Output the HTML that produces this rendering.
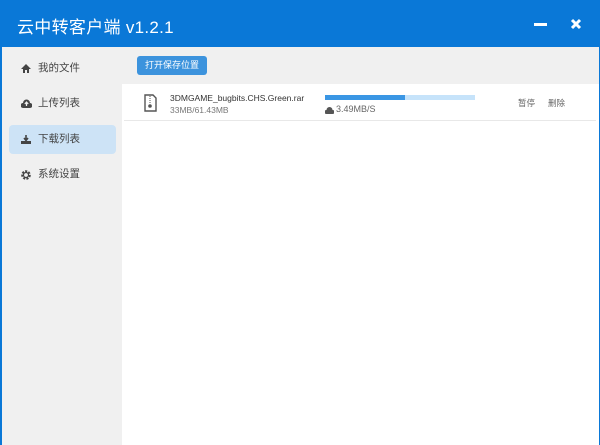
<html><head><style>
body{margin:0;width:600px;height:445px;overflow:hidden;font-family:"Liberation Sans","Noto Sans CJK SC",sans-serif;background:#0a78d7;position:relative}
.hd{position:absolute;left:0;top:0;width:600px;height:47px;background:#0a78d7;color:#fff;font-size:17px}
.side{position:absolute;left:2px;top:47px;width:120px;height:398px;background:#f0f0f0}
.main{position:absolute;left:122px;top:47px;width:477px;height:398px;background:#fff}
.tb{height:37px;background:#f0f0f0;position:relative}
.btn{position:absolute;left:15px;top:9px;width:70px;height:19px;background:#3c93dd;border-radius:3px;color:#fff;font-size:9px;text-align:center;line-height:19px}
.it{position:absolute;left:7px;width:107px;height:29px;font-size:10.5px;color:#444;line-height:29px;border-radius:4px}
.it svg{position:absolute;left:12px;top:10px}
.it b{font-weight:normal;position:absolute;left:29px}
.sm{font-size:9px;color:#333}
</style></head><body>
<div class="hd"><div style="position:absolute;left:17px;top:13px;letter-spacing:0.3px">云中转客户端 v1.2.1</div>
<div style="position:absolute;left:534px;top:23px;width:13px;height:3px;background:#fff"></div>
<svg style="position:absolute;left:570px;top:18px" width="12" height="12"><path d="M2 2L10 10M10 2L2 10" stroke="#fff" stroke-width="3"/></svg></div>
<div class="side">
<div class="it" style="top:7px"><svg width="10" height="9"><path d="M5 0L0 5H2V9H4V6H6V9H8V5H10Z" fill="#444"/></svg><b>我的文件</b></div>
<div class="it" style="top:42px"><svg width="11" height="9"><path d="M2 9A2 2 0 0 1 2 4A3.5 3.5 0 0 1 9 4A2.5 2.5 0 0 1 9 9Z" fill="#444"/><path d="M5.5 3V7M3.8 5L5.5 3L7.2 5" stroke="#f0f0f0" stroke-width="1.2" fill="none"/></svg><b>上传列表</b></div>
<div class="it" style="top:78px;background:#cde3f6"><svg width="10" height="9"><path d="M5 0V5M3 3L5 5.5L7 3" stroke="#444" stroke-width="1.6" fill="none"/><rect x="0" y="6" width="10" height="3" fill="#444"/></svg><b>下载列表</b></div>
<div class="it" style="top:113px"><svg width="10" height="10"><circle cx="5" cy="5" r="3.6" fill="none" stroke="#444" stroke-width="2.4" stroke-dasharray="2 1.2"/><circle cx="5" cy="5" r="2.5" fill="none" stroke="#444" stroke-width="1.2"/></svg><b>系统设置</b></div>
</div>
<div class="main">
<div class="tb"><div class="btn">打开保存位置</div></div>
<svg style="position:absolute;left:22px;top:47px" width="13" height="18"><path d="M1 1H9L12 4V17H1Z" fill="none" stroke="#555" stroke-width="1.4"/><path d="M6 2V9" stroke="#555" stroke-dasharray="1 1"/><circle cx="6" cy="12" r="1.8" fill="#555"/></svg>
<div class="sm" style="position:absolute;left:48px;top:46px;font-size:8.5px">3DMGAME_bugbits.CHS.Green.rar</div>
<div class="sm" style="position:absolute;left:48px;top:58px;font-size:8.5px;color:#777">33MB/61.43MB</div>
<div style="position:absolute;left:203px;top:48px;width:150px;height:5px;background:#c6e3fa"><div style="width:80px;height:5px;background:#3a96e4"></div></div>
<svg style="position:absolute;left:203px;top:60px" width="9" height="7"><path d="M1.5 7A1.5 1.5 0 0 1 1.5 3A3 3 0 0 1 7.5 3A2 2 0 0 1 7.5 7Z" fill="#555"/></svg>
<div style="position:absolute;left:214px;top:57px;font-size:9px;color:#666">3.49MB/S</div>
<div style="position:absolute;left:396px;top:50px;font-size:8.5px;color:#666">暂停</div>
<div style="position:absolute;left:426px;top:50px;font-size:8.5px;color:#666">删除</div>
<div style="position:absolute;left:2px;top:73px;width:472px;height:1px;background:#e8e8e8"></div>
</div>
</body></html>
